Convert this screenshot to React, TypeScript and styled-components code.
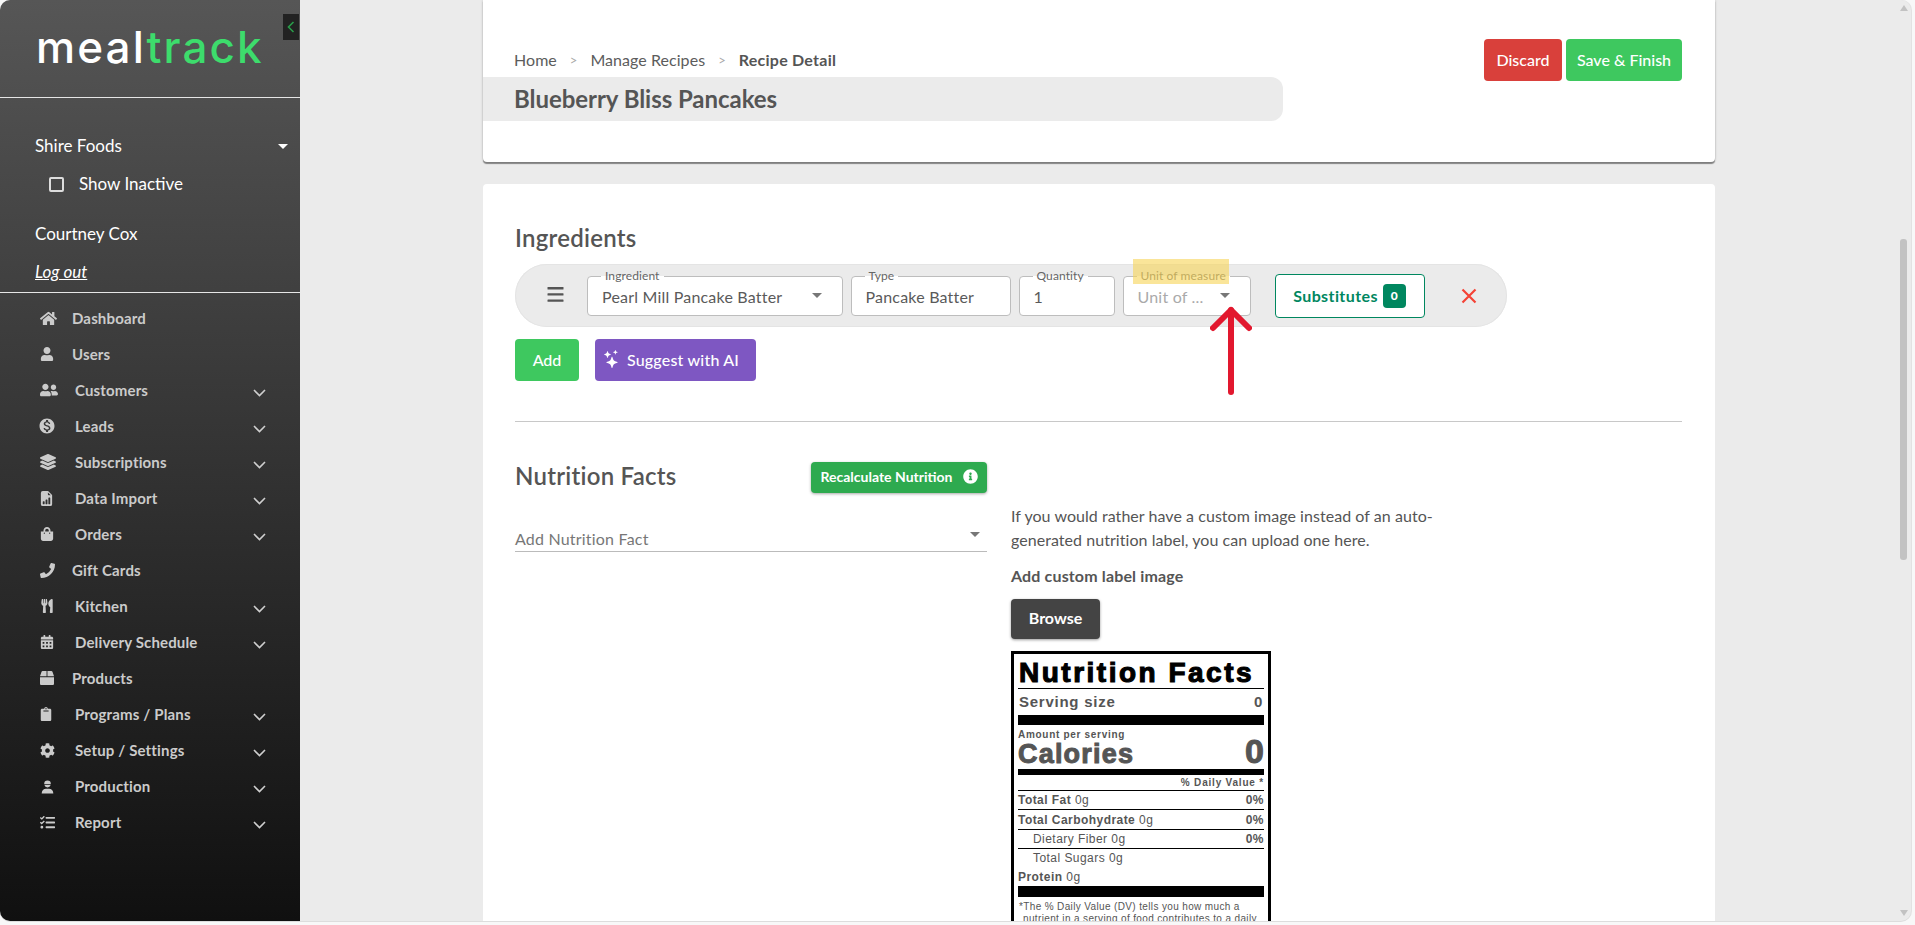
import React from 'react';
import styled, { createGlobalStyle } from 'styled-components';
import {
  FaHome, FaUser, FaUserFriends, FaLayerGroup, FaShoppingBag, FaPhoneAlt, FaUtensils,
  FaCalendarAlt, FaBox, FaClipboard, FaCog, FaTasks, FaInfoCircle,
} from 'react-icons/fa';
import { MdMonetizationOn } from 'react-icons/md';
import { BsFileEarmarkBarGraphFill, BsStars } from 'react-icons/bs';

const Global = createGlobalStyle`
  html, body { margin: 0; padding: 0; height: 100%; overflow: hidden; background: #f8f8f8; }
  body { font-family: Lato, "Liberation Sans", sans-serif; color: #555; }
  * { box-sizing: border-box; }
`;

const Frame = styled.div`
  width: 1911px; height: 921px; display: flex; overflow: hidden;
  border-radius: 10px; background: #ebebeb; position: relative;
  box-shadow: 0 1px 0 #ddd, 1px 0 0 #e2e2e2;
`;

/* Sidebar */
const Sidebar = styled.aside`
  width: 300px; flex: none; position: relative; color: #fff;
  background: linear-gradient(#565656, #101010);
`;
const Collapse = styled.button`
  position: absolute; top: 14px; left: 283px; width: 16px; height: 26px; padding: 0;
  border: 0; background: #222; display: flex; align-items: center; justify-content: center;
`;
const LogoBlock = styled.div`
  height: 98px; border-bottom: 1px solid #e6e6e6; padding: 19px 0 0 36px;
`;
const Logo = styled.div`
  font-family: Inter, sans-serif; font-weight: 500; font-size: 44px; line-height: 56px;
  letter-spacing: 2.1px; color: #fff;
  span { color: #3ddc6c; }
`;
const Account = styled.div`
  height: 195px; border-bottom: 1px solid #e6e6e6; padding: 37px 0 0 35px;
  font-size: 17px; line-height: 22px;
`;
const AccountTop = styled.div`
  display: flex; justify-content: space-between; align-items: center; padding-right: 12px;
`;
const WhiteCaret = styled.i`
  width: 0; height: 0; border: 5px solid transparent; border-top-color: #fff; border-bottom: 0;
`;
const CheckRow = styled.label`
  display: flex; align-items: center; gap: 15px; margin: 16px 0 0 14px;
`;
const Check = styled.i`
  width: 15px; height: 15px; border: 2px solid #ddd; border-radius: 2px; display: block;
`;
const Person = styled.div`margin-top: 28px;`;
const LogOut = styled.a`
  display: block; margin-top: 16px; font-style: italic; text-decoration: underline; color: #fff;
`;
const Nav = styled.nav`padding-top: 7px;`;
const NavRow = styled.div`
  height: 36px; display: flex; align-items: center; padding: 0 34px 0 40px;
  color: #cbcbcb; font-weight: 700; font-size: 15px;
`;
const NavIcon = styled.span<{ $wide?: boolean }>`
  width: ${p => (p.$wide ? 35 : 32)}px; flex: none; display: flex; align-items: center;
  svg { display: block; }
`;
const NavLabel = styled.span`flex: 1; letter-spacing: .15px;`;
const Chevron = styled.svg`margin-top: 6px; display: block;`;

/* Main */
const Main = styled.main`
  flex: 1; min-width: 0; padding-left: 183px; position: relative; overflow: hidden;
`;
const ScrollTrack = styled.div`
  position: absolute; top: 5px; bottom: 5px; right: 3px; width: 9px;
  display: flex; flex-direction: column; align-items: center;
`;
const ArrowUp = styled.i`
  width: 0; height: 0; border: 4.5px solid transparent; border-bottom: 6px solid #c2c2c2; border-top: 0;
`;
const ArrowDown = styled.i`
  width: 0; height: 0; margin-top: auto; border: 4.5px solid transparent; border-top: 6px solid #c2c2c2; border-bottom: 0;
`;
const Thumb = styled.div`
  width: 7px; height: 321px; margin-top: 228px; background: #c2c2c2; border-radius: 3px;
`;
const TopCard = styled.section`
  width: 1232px; height: 162px; background: #fff; display: flex; justify-content: space-between;
  border-radius: 0 0 4px 4px; box-shadow: 0 2px 1px rgba(0,0,0,.42), 0 0 3px rgba(0,0,0,.2);
`;
const HeaderLeft = styled.div`padding-top: 50px;`;
const Crumbs = styled.div`
  display: flex; align-items: center; gap: 13px; font-size: 16px; line-height: 20px;
  padding-left: 31px; color: #5c5c5c; letter-spacing: .05px;
`;
const CrumbSep = styled.span`color: #aaa; font-size: 13px;`;
const CrumbNow = styled.b`color: #555; font-weight: 700; letter-spacing: .25px;`;
const TitleBar = styled.h1`
  width: 800px; height: 44px; margin: 7px 0 0; padding-left: 31px; background: #ebebeb;
  border-radius: 0 12px 12px 0; font-size: 24px; line-height: 44px; font-weight: 700; color: #555;
  letter-spacing: -.05px;
`;
const Actions = styled.div`display: flex; gap: 4px; padding: 39px 33px 0 0;`;
const Btn = styled.button<{ $bg: string; $w: number; $pr?: number }>`
  width: ${p => p.$w}px; height: 42px; border: 0; border-radius: 4px; background: ${p => p.$bg};
  color: #fff; font: 500 16px Lato, sans-serif; padding: 0 ${p => p.$pr ?? 0}px 2px 0;
  display: inline-flex; align-items: center; justify-content: center; gap: 6px;
`;
const AiLabel = styled.span`letter-spacing: .2px;`;
const BodyCard = styled.section`
  width: 1232px; margin-top: 22px; background: #fff; border-radius: 4px 4px 0 0; padding: 40px 33px 0 32px;
  height: 800px;
`;
const H2 = styled.h2`
  margin: 0; font-size: 24px; line-height: 28px; font-weight: 600; color: #555; letter-spacing: .25px;
`;
const Pill = styled.div`
  height: 63px; width: 992px; margin-top: 12px; background: #ebebeb; border-radius: 32px;
  display: flex; align-items: center; padding-left: 72px; position: relative;
  box-shadow: inset 0 0 0 1px #e4e4e4;
`;
const Handle = styled.svg`position: absolute; left: 32px; top: 23px;`;
const Field = styled.div<{ $w: number; $gap?: number }>`
  width: ${p => p.$w}px; height: 40px; flex: none; position: relative; margin-right: ${p => p.$gap ?? 8}px;
  background: #fff; border: 1px solid #bdbdbd; border-radius: 4px;
  display: flex; align-items: center; justify-content: space-between; padding: 1px 20px 0 14px;
  font-size: 16px; letter-spacing: .2px; color: #5a5a5a;
`;
const FieldLabel = styled.label`
  position: absolute; left: 13px; top: -8px; padding: 0 4px; font-size: 12px; line-height: 14px; color: #666;
  background: linear-gradient(#ebebeb 50%, #fff 50%); white-space: nowrap; letter-spacing: .1px;
`;
const Placeholder = styled.span`color: #aaa;`;
const Caret = styled.i`
  width: 0; height: 0; border: 5px solid transparent; border-top-color: #777; border-bottom: 0; margin-top: -1px;
`;
const Highlight = styled.span`
  position: absolute; left: 9px; top: -18px; width: 96px; height: 25px; background: rgba(247, 213, 90, .62);
  pointer-events: none;
`;
const UpArrow = styled.svg`
  position: absolute; left: 86px; top: 28px; pointer-events: none;
`;
const Subs = styled.button`
  width: 150px; height: 44px; border: 1px solid #00875f; border-radius: 4px; background: #fff; flex: none;
  color: #00875f; font: 700 16px Lato, sans-serif; letter-spacing: .4px; padding: 0;
  display: flex; align-items: center; justify-content: center; gap: 5px;
`;
const Badge = styled.b`
  width: 23px; height: 24px; border-radius: 4px; background: #00875f; color: #fff; font-size: 12px;
  display: flex; align-items: center; justify-content: center; letter-spacing: 0;
`;
const Remove = styled.svg`margin-left: 35px; display: block;`;
const BtnRow = styled.div`display: flex; gap: 16px; margin-top: 12px;`;
const Rule = styled.hr`
  border: 0; height: 1px; background: #c8c8c8; margin: 40px 0 40px;
`;
const NutriGrid = styled.div`display: grid; grid-template-columns: 472px 1fr; column-gap: 24px;`;
const NutriHead = styled.div`
  display: flex; justify-content: space-between; align-items: center; height: 31px;
  h2 { margin-top: -3px; }
`;
const Recalc = styled.button`
  width: 176px; height: 31px; border: 0; border-radius: 4px; background: #2eaa4f; color: #fff;
  font: 700 14px Lato, sans-serif; padding: 0 0 2px; display: flex; align-items: center; justify-content: center; gap: 10px;
  box-shadow: 0 1px 3px rgba(0,0,0,.35);
`;
const UnderSelect = styled.div`
  margin-top: 27px; height: 32px; border-bottom: 1px solid #bbb; display: flex; align-items: center;
  justify-content: space-between; padding: 6px 7px 0 0; color: #777; font-size: 16px; letter-spacing: .2px;
  i { margin-top: -8px; }
`;
const Para = styled.p`margin: 42px 0 0; max-width: 450px; font-size: 16px; line-height: 24px; color: #555; letter-spacing: .05px;`;
const Strong = styled.div`margin-top: 12px; font-size: 16px; line-height: 24px; font-weight: 700; color: #555; letter-spacing: .15px;`;
const Browse = styled.button`
  display: block; width: 89px; height: 40px; margin-top: 11px; border: 0; border-radius: 4px; background: #444;
  color: #fff; font: 700 16px Lato, sans-serif; padding: 0 0 4px; box-shadow: 0 1px 3px rgba(0,0,0,.4);
`;

/* Nutrition label */
const LabelBox = styled.div`
  width: 260px; margin-top: 12px; border: 3px solid #000; padding: 0 4px; background: #fff;
  font-family: "Liberation Sans", Arial, sans-serif; color: #555;
`;
const LabelTitle = styled.div`
  height: 35px; border-bottom: 1px solid #000; padding-left: 1px; color: #000; font-weight: 700; font-size: 28px;
  line-height: 37px; letter-spacing: 2.5px; -webkit-text-stroke: 1.1px #000; white-space: nowrap;
`;
const Line = styled.div<{ $h: number; $rule?: boolean; $indent?: boolean }>`
  height: ${p => p.$h}px; display: flex; justify-content: space-between; align-items: center;
  padding-left: ${p => (p.$indent ? 15 : 0)}px;
  border-bottom: ${p => (p.$rule ? '1px solid #000' : '0')};
  font-size: 12px; letter-spacing: .45px;
  b { font-weight: 700; }
`;
const Serving = styled(Line)`font-size: 15px; font-weight: 700; padding: 0 1px 2px; letter-spacing: .75px;`;
const Bar = styled.div<{ $h: number }>`height: ${p => p.$h}px; background: #000;`;
const Amount = styled.div`font-size: 10px; font-weight: 700; line-height: 14px; padding-top: 3px; height: 17px; letter-spacing: .7px;`;
const Calories = styled.div`
  height: 27px; display: flex; justify-content: space-between; align-items: center; font-weight: 700;
  font-size: 27px; letter-spacing: 1.2px; -webkit-text-stroke: 1px #555; padding-bottom: 3px;
  span:last-child { font-size: 34px; letter-spacing: 0; padding-bottom: 5px; }
`;
const DV = styled(Line)`justify-content: flex-end; font-size: 10px; font-weight: 700; letter-spacing: .8px;`;
const Foot = styled.div`
  font-size: 10px; line-height: 12px; padding: 4px 1px 0 5px; letter-spacing: .36px; text-indent: -4px;
`;

const ChevronDown = () => (
  <Chevron width="13" height="8" viewBox="0 0 13 8" fill="none" stroke="#cfcfcf" strokeWidth="1.6">
    <path d="M1 1l5.5 5.5L12 1" />
  </Chevron>
);

const HardHatUser = ({ size }: { size: number }) => (
  <svg width={size} height={size} viewBox="0 0 16 16" fill="currentColor">
    <path d="M4.5 5a3.5 3.5 0 0 1 7 0v.6h-7z" />
    <path d="M4.7 6.4h6.6A3.4 3.4 0 0 1 8 9 3.4 3.4 0 0 1 4.7 6.4z" />
    <path d="M1.8 15.4c0-3 2-5 4.6-5h3.2c2.6 0 4.6 2 4.6 5z" />
  </svg>
);

type Item = { label: string; icon: React.ReactNode; expand?: boolean };
const items: Item[] = [
  { label: 'Dashboard', icon: <FaHome size={17} /> },
  { label: 'Users', icon: <FaUser size={14} /> },
  { label: 'Customers', icon: <FaUserFriends size={18} />, expand: true },
  { label: 'Leads', icon: <MdMonetizationOn size={18} style={{ marginLeft: -2 }} />, expand: true },
  { label: 'Subscriptions', icon: <FaLayerGroup size={16} />, expand: true },
  { label: 'Data Import', icon: <BsFileEarmarkBarGraphFill size={15} style={{ marginLeft: -1 }} />, expand: true },
  { label: 'Orders', icon: <FaShoppingBag size={14} />, expand: true },
  { label: 'Gift Cards', icon: <FaPhoneAlt size={15} style={{ transform: 'scaleX(-1)' }} /> },
  { label: 'Kitchen', icon: <FaUtensils size={14} />, expand: true },
  { label: 'Delivery Schedule', icon: <FaCalendarAlt size={14} />, expand: true },
  { label: 'Products', icon: <FaBox size={14} /> },
  { label: 'Programs / Plans', icon: <FaClipboard size={14} style={{ width: 12 }} />, expand: true },
  { label: 'Setup / Settings', icon: <FaCog size={15} />, expand: true },
  { label: 'Production', icon: <HardHatUser size={15} />, expand: true },
  { label: 'Report', icon: <FaTasks size={15} />, expand: true },
];

export default function App() {
  return (
    <>
      <Global />
      <Frame>
        <Sidebar>
          <Collapse aria-label="Collapse">
            <svg width="8" height="12" viewBox="0 0 8 12" fill="none" stroke="#2a9d4a" strokeWidth="1.6">
              <path d="M6.5 1L1.5 6l5 5" />
            </svg>
          </Collapse>
          <LogoBlock>
            <Logo>meal<span>track</span></Logo>
          </LogoBlock>
          <Account>
            <AccountTop>Shire Foods<WhiteCaret /></AccountTop>
            <CheckRow><Check />Show Inactive</CheckRow>
            <Person>Courtney Cox</Person>
            <LogOut>Log out</LogOut>
          </Account>
          <Nav>
            {items.map(it => (
              <NavRow key={it.label}>
                <NavIcon $wide={it.expand}>{it.icon}</NavIcon>
                <NavLabel>{it.label}</NavLabel>
                {it.expand && <ChevronDown />}
              </NavRow>
            ))}
          </Nav>
        </Sidebar>
        <Main>
          <TopCard>
            <HeaderLeft>
              <Crumbs>
                <span>Home</span><CrumbSep>&gt;</CrumbSep>
                <span>Manage Recipes</span><CrumbSep>&gt;</CrumbSep>
                <CrumbNow>Recipe Detail</CrumbNow>
              </Crumbs>
              <TitleBar>Blueberry Bliss Pancakes</TitleBar>
            </HeaderLeft>
            <Actions>
              <Btn $bg="#d9403b" $w={78}>Discard</Btn>
              <Btn $bg="#3ec85f" $w={116}>Save &amp; Finish</Btn>
            </Actions>
          </TopCard>
          <BodyCard>
            <H2>Ingredients</H2>
            <Pill>
              <Handle width="17" height="15" viewBox="0 0 17 15" fill="#555">
                <rect x="0.5" width="16" height="2.4" rx=".5" />
                <rect x="0.5" y="6.2" width="16" height="2.4" rx=".5" />
                <rect x="0.5" y="12.4" width="16" height="2.4" rx=".5" />
              </Handle>
              <Field $w={255.5}>
                <FieldLabel>Ingredient</FieldLabel>
                Pearl Mill Pancake Batter<Caret />
              </Field>
              <Field $w={160}>
                <FieldLabel>Type</FieldLabel>
                Pancake Batter
              </Field>
              <Field $w={96}>
                <FieldLabel>Quantity</FieldLabel>
                1
              </Field>
              <Field $w={128} $gap={24}>
                <FieldLabel>Unit of measure</FieldLabel>
                <Placeholder>Unit of ...</Placeholder><Caret />
                <Highlight />
                <UpArrow width="42" height="90" viewBox="0 0 42 90" fill="none" stroke="#e2182e" strokeWidth="6" strokeLinecap="round" strokeLinejoin="round">
                  <path d="M21 87V5" />
                  <path d="M3 23L21 5l18 18" />
                </UpArrow>
              </Field>
              <Subs>Substitutes<Badge>0</Badge></Subs>
              <Remove width="18" height="18" viewBox="0 0 18 18" fill="none" stroke="#f44336" strokeWidth="2.2">
                <path d="M2.5 2.5l13 13M15.5 2.5l-13 13" />
              </Remove>
            </Pill>
            <BtnRow>
              <Btn $bg="#3ec85f" $w={64}>Add</Btn>
              <Btn $bg="#7e57c2" $w={161} $pr={9}><BsStars size={18} /><AiLabel>Suggest with AI</AiLabel></Btn>
            </BtnRow>
            <Rule />
            <NutriGrid>
              <div>
                <NutriHead>
                  <H2>Nutrition Facts</H2>
                  <Recalc>Recalculate Nutrition<FaInfoCircle size={15} /></Recalc>
                </NutriHead>
                <UnderSelect>Add Nutrition Fact<Caret /></UnderSelect>
              </div>
              <div>
                <Para>If you would rather have a custom image instead of an auto-generated nutrition label, you can upload one here.</Para>
                <Strong>Add custom label image</Strong>
                <Browse>Browse</Browse>
                <LabelBox>
                  <LabelTitle>Nutrition Facts</LabelTitle>
                  <Serving $h={26}><span>Serving size</span><span>0</span></Serving>
                  <Bar $h={10} />
                  <Amount>Amount per serving</Amount>
                  <Calories><span>Calories</span><span>0</span></Calories>
                  <Bar $h={6} />
                  <DV $h={16} $rule>% Daily Value *</DV>
                  <Line $h={19} $rule><span><b>Total Fat</b> 0g</span><b>0%</b></Line>
                  <Line $h={20} $rule><span><b>Total Carbohydrate</b> 0g</span><b>0%</b></Line>
                  <Line $h={19} $rule $indent><span>Dietary Fiber 0g</span><b>0%</b></Line>
                  <Line $h={18} $indent><span>Total Sugars 0g</span></Line>
                  <Line $h={19}><span><b>Protein</b> 0g</span></Line>
                  <Bar $h={11} />
                  <Foot>*The % Daily Value (DV) tells you how much a<br />nutrient in a serving of food contributes to a daily<br />diet.</Foot>
                </LabelBox>
              </div>
            </NutriGrid>
          </BodyCard>
          <ScrollTrack>
            <ArrowUp />
            <Thumb />
            <ArrowDown />
          </ScrollTrack>
        </Main>
      </Frame>
    </>
  );
}
